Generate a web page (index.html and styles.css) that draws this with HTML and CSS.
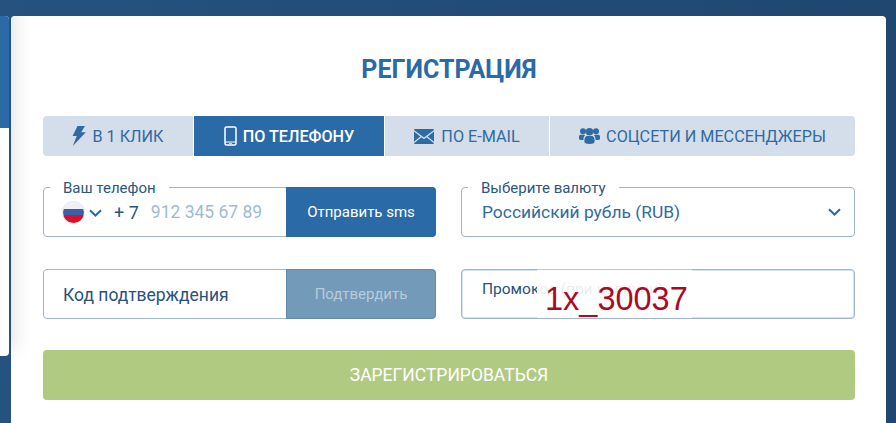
FILE: index.html
```html
<!DOCTYPE html>
<html lang="ru">
<head>
<meta charset="utf-8">
<title>Регистрация</title>
<link rel="stylesheet" href="styles.css">
</head>
<body>
<div class="under-panel"><div class="under-panel-top"></div></div>
<main class="modal">
  <div class="modal-shade"></div>
  <h1 class="title">РЕГИСТРАЦИЯ</h1>
  <nav class="tabs">
    <a class="tab tab-click">
      <svg class="ico" width="14" height="20" viewBox="0 0 14 20"><path d="M5.500 0H13L9.200 6.300h4.600L.8 20l4-10H.6z" fill="currentColor"/></svg>
      В 1 КЛИК
    </a>
    <a class="tab tab-phone active">
      <svg class="ico" width="13" height="20" viewBox="0 0 13 20"><rect x="1" y="1" width="11" height="18" rx="1.600" fill="none" stroke="currentColor" stroke-width="1.500"/><path d="M1 16h11" stroke="currentColor" stroke-width="1"/><path d="M5 17.600h3" stroke="currentColor" stroke-width=".8"/></svg>
      ПО ТЕЛЕФОНУ
    </a>
    <a class="tab tab-mail">
      <svg class="ico" width="20" height="15" viewBox="0 0 20 15"><path d="M1 0h18a1 1 0 0 1 1 1L10 8.600 0 1a1 1 0 0 1 1-1z" fill="currentColor"/><path d="M0 2.600v10.200L6.400 7.400zM20 2.600v10.200l-6.400-5.400zM7.500 8.300 0 14.200a1 1 0 0 0 1 .8h18a1 1 0 0 0 1-.8l-7.500-5.900L10 10.200z" fill="currentColor"/></svg>
      ПО E-MAIL
    </a>
    <a class="tab tab-social">
      <svg class="ico" width="21" height="16" viewBox="0 0 21 16"><circle cx="4" cy="3.200" r="3" fill="currentColor"/><circle cx="17" cy="3.200" r="3" fill="currentColor"/><circle cx="10.500" cy="3.800" r="3.800" fill="currentColor"/><path d="M0 11V8.600C0 7.400.8 6.800 2 6.800h3c.5 0 .9.2 1.100.5C5 8.300 4.500 9.500 4.400 12 1.500 12 0 11.700 0 11zM21 11V8.600c0-1.200-.8-1.800-2-1.800h-3c-.5 0-.9.2-1.100.5 1.100 1 1.600 2.200 1.700 4.700 2.900 0 4.400-.3 4.400-1z" fill="currentColor"/><path d="M5.400 13.800c0-3.600.6-5.800 3-5.800h4.200c2.400 0 3 2.200 3 5.800 0 1.600-2.300 2.200-5.100 2.200s-5.100-.6-5.100-2.200z" fill="currentColor"/></svg>
      СОЦСЕТИ И МЕССЕНДЖЕРЫ
    </a>
  </nav>
  <form class="grid">
    <div class="field">
      <span class="legend">Ваш телефон</span>
      <span class="flag"></span>
      <svg class="chev" width="13" height="8" viewBox="0 0 13 8"><path d="M1 1.200 6.500 6.500 12 1.200" fill="none" stroke="currentColor" stroke-width="2"/></svg>
      <span class="prefix">+ 7</span>
      <span class="placeholder">912 345 67 89</span>
      <button type="button" class="side-btn">Отправить sms</button>
    </div>
    <div class="field field-select">
      <span class="legend">Выберите валюту</span>
      <span class="select-value">Российский рубль (RUB)</span>
      <svg class="chev" width="13" height="8" viewBox="0 0 13 8"><path d="M1 1.200 6.500 6.500 12 1.200" fill="none" stroke="currentColor" stroke-width="2"/></svg>
    </div>
    <div class="field">
      <span class="code-label">Код подтверждения</span>
      <button type="button" class="side-btn side-btn-off">Подтвердить</button>
    </div>
    <div class="field field-promo">
      <span class="promo-label">Промокод (при наличии)</span>
      <div class="promo-overlay">1x_30037</div>
    </div>
    <button type="button" class="submit">ЗАРЕГИСТРИРОВАТЬСЯ</button>
  </form>
</main>
</body>
</html>
```
FILE: styles.css
```css
* { box-sizing: border-box; }
html, body { height: 100%; }
body {
  margin: 0;
  height: 423px;
  overflow: hidden;
  position: relative;
  background: linear-gradient(90deg, #25527f 0, #1f4770 100%);
  font-family: Roboto, "Liberation Sans", sans-serif;
}
.under-panel {
  position: absolute;
  left: 0;
  top: 16px;
  width: 9px;
  height: 340px;
  background: #fff;
  border-radius: 0 4px 4px 0;
}
.under-panel-top {
  height: 112px;
  background: #2a6aa6;
  border-radius: 0 4px 0 0;
}
.modal {
  position: absolute;
  left: 11px;
  top: 16px;
  width: 875px;
  height: 407px;
  background: #fff;
  border-radius: 4px 4px 0 0;
  padding: 0 31px 0 32px;
}
.modal-shade {
  position: absolute;
  left: 0;
  top: 0;
  width: 20px;
  height: 346px;
  background: linear-gradient(90deg, #ececec 0, #f7f7f7 40%, #fff 100%);
  border-radius: 4px 0 0 0;
  -webkit-mask-image: linear-gradient(180deg, #000 0, #000 93%, transparent 100%);
}
.title {
  margin: 0;
  height: 100px;
  padding-top: 39px;
  text-align: center;
  font-size: 25px;
  line-height: 30px;
  font-weight: 700;
  color: #2a6aa6;
}
.tabs {
  display: flex;
  gap: 1px;
  height: 40px;
  position: relative;
}
.tab {
  display: flex;
  align-items: center;
  justify-content: center;
  gap: 6px;
  background: #d3deea;
  color: #2f6ba3;
  font-size: 16.200px;
}
.tab-click { width: 150px; border-radius: 4px 0 0 4px; }
.tab-phone { width: 190px; }
.tab-mail { width: 164px; gap: 7px; }
.tab-social { flex: 1; border-radius: 0 4px 4px 0; gap: 6px; }
.tab.active { background: #2a6aa6; color: #fff; font-weight: 500; }
.ico { flex: none; }
.grid {
  display: grid;
  grid-template-columns: 393px 394px;
  column-gap: 25px;
  row-gap: 32px;
  margin-top: 31px;
  position: relative;
}
.field {
  position: relative;
  height: 50px;
  border: 1px solid #9db6ce;
  border-radius: 4px;
  display: flex;
  align-items: center;
  color: #1f4a75;
}
.legend {
  position: absolute;
  left: 6px;
  top: -8px;
  padding: 0 13px;
  background: #fff;
  font-size: 15px;
  line-height: 16px;
  color: #2b5780;
}
.flag {
  flex: none;
  margin-left: 19px;
  width: 21px;
  height: 21px;
  border-radius: 50%;
  background: linear-gradient(180deg, #eef0f4 0 33%, #3d5ea8 33% 60%, #d8102c 60% 100%);
  box-shadow: 0 0 0 1px #e4e9ef;
}
.chev { flex: none; color: #2a6aa6; margin-left: 5px; margin-top: 2px; }
.prefix { margin-left: 12px; font-size: 18px; color: #2b5780; }
.placeholder { margin-left: 12px; font-size: 17.500px; color: #9fbad4; }
.side-btn {
  position: absolute;
  right: -1px;
  top: -1px;
  bottom: -1px;
  width: 150px;
  border: 0;
  border-radius: 0 4px 4px 0;
  background: #2a6aa6;
  color: #fff;
  font-family: inherit;
  font-size: 15px;
}
.side-btn-off {
  background: #749ab9;
  color: #b6cbdc;
  border: 1px solid #5f8bb0;
}
.field-select { justify-content: space-between; padding: 0 13px 0 20px; }
.select-value { font-size: 17.400px; color: #2f6ba3; }
.field-select .chev { margin: 0; }
.code-label { margin-left: 19px; font-size: 17.500px; color: #27527d; margin-top: 2px; }
.field-promo { box-shadow: inset 0 0 0 1px #d5e2ef; }
.promo-label { margin-left: 20px; margin-top: -10px; font-size: 15.500px; color: #27527d; }
.promo-overlay {
  position: absolute;
  left: 75px;
  top: -1px;
  width: 155px;
  height: 49px;
  border-top: 1px solid #b5c9dc;
  background: rgba(255, 255, 255, .9);
  padding-left: 8px;
  font-family: "Liberation Sans", Arial, sans-serif;
  font-size: 32.500px;
  line-height: 58px;
  color: #ac0a22;
}
.submit {
  grid-column: 1 / -1;
  height: 50px;
  margin-top: -1px;
  border: 0;
  border-radius: 4px;
  background: #b1ca82;
  color: #fff;
  font-family: inherit;
  font-size: 17.500px;
  font-weight: 400;
}
```
